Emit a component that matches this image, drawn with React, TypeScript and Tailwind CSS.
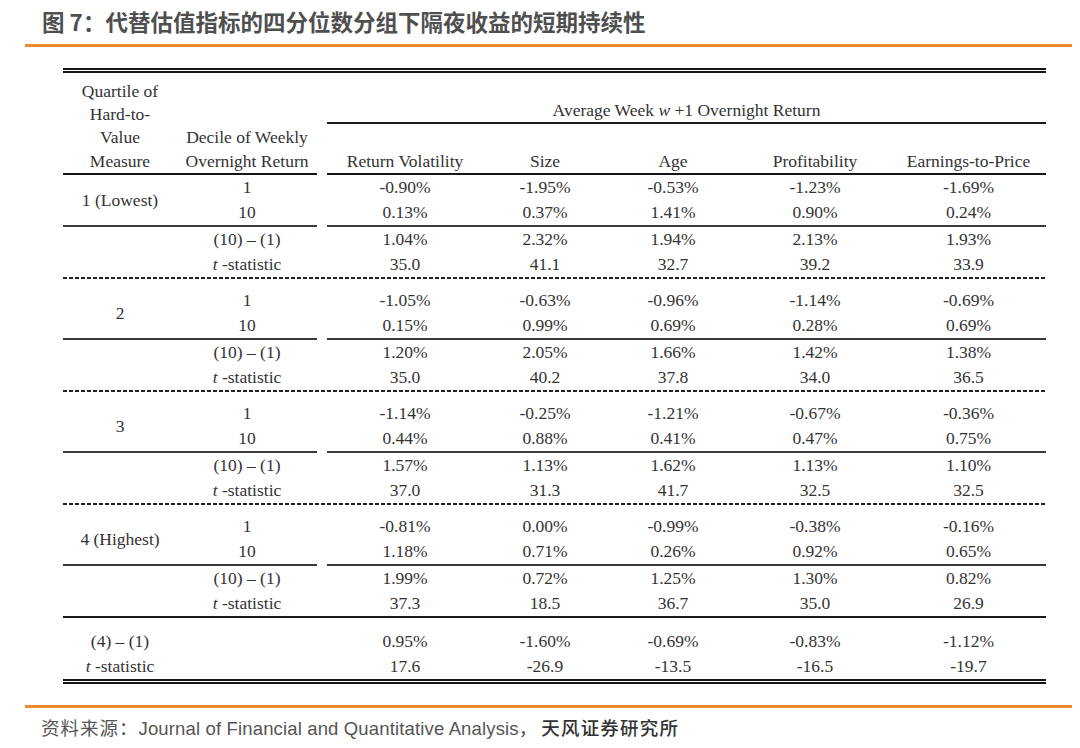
import React from "react";

const COLS = "grid-cols-[114px_140px_10px_156px_124px_132px_152px_155px]";

type Group = {
  label: string;
  r1: string[];
  r10: string[];
  diff: string[];
  t: string[];
  last?: boolean;
};

const groups: Group[] = [
  {
    label: "1 (Lowest)",
    r1: ["-0.90%", "-1.95%", "-0.53%", "-1.23%", "-1.69%"],
    r10: ["0.13%", "0.37%", "1.41%", "0.90%", "0.24%"],
    diff: ["1.04%", "2.32%", "1.94%", "2.13%", "1.93%"],
    t: ["35.0", "41.1", "32.7", "39.2", "33.9"],
  },
  {
    label: "2",
    r1: ["-1.05%", "-0.63%", "-0.96%", "-1.14%", "-0.69%"],
    r10: ["0.15%", "0.99%", "0.69%", "0.28%", "0.69%"],
    diff: ["1.20%", "2.05%", "1.66%", "1.42%", "1.38%"],
    t: ["35.0", "40.2", "37.8", "34.0", "36.5"],
  },
  {
    label: "3",
    r1: ["-1.14%", "-0.25%", "-1.21%", "-0.67%", "-0.36%"],
    r10: ["0.44%", "0.88%", "0.41%", "0.47%", "0.75%"],
    diff: ["1.57%", "1.13%", "1.62%", "1.13%", "1.10%"],
    t: ["37.0", "31.3", "41.7", "32.5", "32.5"],
  },
  {
    label: "4 (Highest)",
    r1: ["-0.81%", "0.00%", "-0.99%", "-0.38%", "-0.16%"],
    r10: ["1.18%", "0.71%", "0.26%", "0.92%", "0.65%"],
    diff: ["1.99%", "0.72%", "1.25%", "1.30%", "0.82%"],
    t: ["37.3", "18.5", "36.7", "35.0", "26.9"],
    last: true,
  },
];

function Vals({ vals }: { vals: string[] }) {
  return (
    <>
      {vals.map((v, i) => (
        <div key={i} className={i === 0 ? "col-start-4" : ""}>
          {v}
        </div>
      ))}
    </>
  );
}

function TStat() {
  return (
    <span>
      <i>t</i> -statistic
    </span>
  );
}

function SplitLine({ cls }: { cls: string }) {
  return (
    <div className={`grid ${COLS}`}>
      <div className={`col-span-2 ${cls}`} />
      <div className={`col-start-4 col-span-5 ${cls}`} />
    </div>
  );
}

function GroupBlock({ g }: { g: Group }) {
  return (
    <div className="flex flex-col">
      <div className={`grid ${COLS} grid-rows-[25px_25px] leading-[25px] text-center`}>
        <div className="row-span-2 flex items-center justify-center">{g.label}</div>
        <div className="col-start-2">1</div>
        <Vals vals={g.r1} />
        <div className="col-start-2">10</div>
        <Vals vals={g.r10} />
      </div>
      <SplitLine cls="h-[1.5px] bg-[#3a3a3a]" />
      <div className={`grid ${COLS} grid-rows-[25px_25px] leading-[25px] text-center`}>
        <div className="col-start-2">(10) – (1)</div>
        <Vals vals={g.diff} />
        <div className="col-start-2">
          <TStat />
        </div>
        <Vals vals={g.t} />
      </div>
      {g.last ? (
        <div className="h-[2px] bg-[#1a1a1a]" />
      ) : (
        <>
          <div className="h-[2px] bg-[image:repeating-linear-gradient(to_right,#222_0px,#222_4px,transparent_4px,transparent_6px)]" />
          <div className="h-[9.5px]" />
        </>
      )}
    </div>
  );
}

export default function App() {
  return (
    <div className="w-[1080px] h-[748px] bg-white overflow-hidden relative">
      {/* Title */}
      <div className="h-[44px] flex items-center pl-[42px] font-['Noto_Sans_CJK_SC',sans-serif] font-bold text-[22.5px] text-[#4f4f4f] whitespace-nowrap">
        图 7：代替估值指标的四分位数分组下隔夜收益的短期持续性
      </div>
      <div className="ml-[25px] w-[1047px] h-[2.5px] bg-[#ef8a2e]" />

      {/* Table */}
      <div className="ml-[63px] w-[983px] mt-[21.5px] font-['Liberation_Serif','Times_New_Roman',serif] text-[17.5px] text-[#333]">
        <div className="h-[5px] border-y-2 border-[#151515]" />

        {/* Header */}
        <div className={`grid ${COLS} h-[100px]`}>
          <div className="flex flex-col justify-end items-center text-center leading-[23.3px]">
            <div>Quartile of</div>
            <div>Hard-to-</div>
            <div>Value</div>
            <div>Measure</div>
          </div>
          <div className="flex flex-col justify-end items-center text-center leading-[23.3px] whitespace-nowrap">
            <div>Decile of Weekly</div>
            <div>Overnight Return</div>
          </div>
          <div className="col-start-4 col-span-5 flex flex-col">
            <div className="h-[25px]" />
            <div className="h-[24px] leading-[24px] text-center">
              Average Week <i>w</i> +1 Overnight Return
            </div>
            <div className="h-[1.5px] bg-[#1a1a1a]" />
            <div className="h-[25.5px]" />
            <div className="grid grid-cols-[156px_124px_132px_152px_155px] h-[24px] leading-[24px] text-center whitespace-nowrap">
              <div>Return Volatility</div>
              <div>Size</div>
              <div>Age</div>
              <div>Profitability</div>
              <div>Earnings-to-Price</div>
            </div>
          </div>
        </div>
        <SplitLine cls="h-[2px] bg-[#151515]" />

        {groups.map((g, i) => (
          <GroupBlock key={i} g={g} />
        ))}

        {/* (4) - (1) */}
        <div className="h-[11px]" />
        <div className={`grid ${COLS} grid-rows-[25px_25px] leading-[25px] text-center`}>
          <div>(4) – (1)</div>
          <Vals vals={["0.95%", "-1.60%", "-0.69%", "-0.83%", "-1.12%"]} />
          <div className="col-start-1">
            <TStat />
          </div>
          <Vals vals={["17.6", "-26.9", "-13.5", "-16.5", "-19.7"]} />
        </div>
        <div className="h-[5px] border-y-2 border-[#151515]" />
      </div>

      {/* Footer */}
      <div className="ml-[25px] w-[1047px] h-[2.5px] bg-[#ef8a2e] mt-[21.5px]" />
      <div className="mt-[9.5px] pl-[41px] h-[24px] leading-[24px] text-[18.5px] font-['Liberation_Sans','Noto_Sans_CJK_SC',sans-serif] text-[#555] whitespace-nowrap">
        <span className="tracking-[1px]">资料来源：</span>
        <span className="tracking-[0.15px]">Journal of Financial and Quantitative Analysis</span>，
        <span className="ml-[4px] font-medium text-[#333] tracking-[1.2px]">天风证券研究所</span>
      </div>
    </div>
  );
}
